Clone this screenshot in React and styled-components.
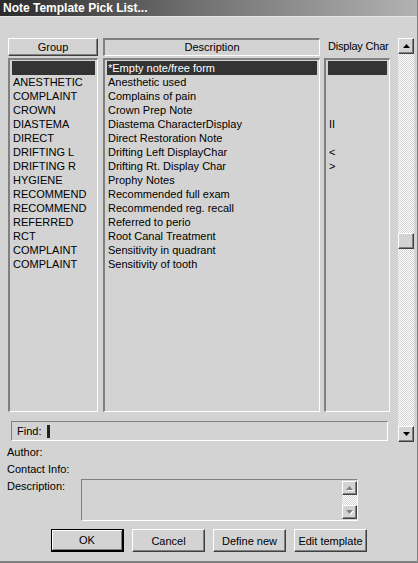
import React from 'react';
import styled, { createGlobalStyle, css } from 'styled-components';

const GlobalStyle = createGlobalStyle`
  html, body { margin: 0; padding: 0; background: #d3d3d3; }
  body {
    font-family: "Liberation Sans", Arial, sans-serif;
    font-size: 11px;
    color: #000;
  }
  * { box-sizing: border-box; }
`;

const raised = css`
  border-top: 1px solid #fff;
  border-left: 1px solid #fff;
  border-right: 1px solid #404040;
  border-bottom: 1px solid #404040;
  box-shadow: inset -1px -1px 0 #808080;
`;

const sunken = css`
  border-top: 1px solid #808080;
  border-left: 1px solid #808080;
  border-right: 1px solid #fff;
  border-bottom: 1px solid #fff;
`;

const checker = css`
  background: repeating-conic-gradient(#fff 0 25%, #d3d3d3 0 50%) 0 0 / 2px 2px;
`;

const Window = styled.div`
  width: 418px;
  height: 563px;
  display: flex;
  flex-direction: column;
  background: #d3d3d3;
  border-right: 1px solid #808080;
  border-bottom: 2px solid #808080;
  overflow: hidden;
`;

const TitleBar = styled.div`
  height: 17px;
  line-height: 17px;
  padding-left: 3px;
  color: #fff;
  font-weight: bold;
  font-size: 12px;
  background: linear-gradient(to right, #2a2a2a, #6e6e6e 45%, #b2b2b2);
  border-bottom: 1px solid #e4e4e4;
`;

const PickGrid = styled.div`
  margin-top: 21px;
  padding-left: 8px;
  display: grid;
  grid-template-columns: 95px 221px 74px 16px;
  grid-template-rows: 18px 354px 28px;
  row-gap: 2px;
`;

const ColHeader = styled.div`
  width: ${(p) => p.$w}px;
  height: 18px;
  line-height: 16px;
  text-align: center;
  ${(p) =>
    p.$pressed
      ? css`
          border-top: 2px solid #808080;
          border-left: 2px solid #808080;
          border-right: 1px solid #fff;
          border-bottom: 1px solid #fff;
          line-height: 15px;
        `
      : raised}
`;

const PlainHeader = styled.div`
  padding-left: 4px;
  line-height: 16px;
  white-space: nowrap;
  letter-spacing: -0.2px;
`;

const ListBox = styled.div`
  width: ${(p) => p.$w}px;
  height: 354px;
  border-top: 2px solid #808080;
  border-left: 2px solid #808080;
  border-right: 1px solid #fff;
  border-bottom: 1px solid #fff;
  padding: 1px 2px 0 2px;
  overflow: hidden;
`;

const Row = styled.div`
  height: 14px;
  line-height: 14px;
  padding-left: 1px;
  white-space: nowrap;
  overflow: hidden;
  background: ${(p) => (p.$sel ? '#333' : 'transparent')};
  color: ${(p) => (p.$sel ? '#fff' : '#000')};
`;

const ScrollBar = styled.div`
  grid-column: 4;
  grid-row: 1 / 4;
  width: 16px;
  display: flex;
  flex-direction: column;
  ${checker}
`;

const ScrollBtn = styled.div`
  width: 16px;
  height: 16px;
  flex: none;
  display: flex;
  align-items: center;
  justify-content: center;
  background: #d3d3d3;
  ${raised}
`;

const Track = styled.div`
  flex: 1;
  display: flex;
  flex-direction: column;
`;

const Thumb = styled.div`
  width: 16px;
  height: 16px;
  background: #d3d3d3;
  ${raised}
`;

const FindBox = styled.div`
  grid-column: 1 / 4;
  margin-left: 3px;
  margin-top: 7px;
  width: 377px;
  height: 20px;
  display: flex;
  align-items: center;
  padding-left: 5px;
  ${sunken}
`;

const Caret = styled.span`
  display: inline-block;
  width: 3px;
  height: 13px;
  margin-left: 6px;
  background: #222;
`;

const Info = styled.div`
  padding-left: 7px;
  margin-top: 2px;
  display: flex;
  flex-direction: column;
`;

const InfoLine = styled.div`
  height: 17px;
  line-height: 17px;
`;

const DescRow = styled.div`
  display: flex;
`;

const DescLabel = styled.div`
  width: 74px;
  line-height: 17px;
`;

const DescBox = styled.div`
  width: 277px;
  height: 42px;
  margin-top: 1px;
  display: flex;
  justify-content: flex-end;
  padding: 1px 0 1px 0;
  ${sunken}
`;

const MiniScroll = styled.div`
  width: 15px;
  display: flex;
  flex-direction: column;
  justify-content: space-between;
  ${checker}
`;

const MiniBtn = styled.div`
  width: 15px;
  height: 14px;
  display: flex;
  align-items: center;
  justify-content: center;
  background: #d3d3d3;
  ${raised}
`;

const ButtonRow = styled.div`
  display: flex;
  gap: 8px;
  padding-left: 51px;
  margin-top: 8px;
`;

const Button = styled.div`
  width: 73px;
  height: 23px;
  display: flex;
  align-items: center;
  justify-content: center;
  background: #d3d3d3;
  white-space: nowrap;
  ${(p) =>
    p.$default
      ? css`
          border: 1px solid #000;
          border-right-width: 2px;
          border-bottom-width: 2px;
          box-shadow: inset 1px 1px 0 #fff, inset -1px -1px 0 #808080;
        `
      : raised}
`;

const Arrow = ({ down, color = '#000', shadow }) => (
  <svg width="7" height="4" viewBox="0 0 7 4" style={{ overflow: 'visible' }}>
    {shadow && (
      <polygon
        points={down ? '1,1 8,1 4.5,5' : '1,5 8,5 4.5,1'}
        fill="#fff"
      />
    )}
    <polygon points={down ? '0,0 7,0 3.5,4' : '0,4 7,4 3.5,0'} fill={color} />
  </svg>
);

const entries = [
  ['', '*Empty note/free form', ''],
  ['ANESTHETIC', 'Anesthetic used', ''],
  ['COMPLAINT', 'Complains of pain', ''],
  ['CROWN', 'Crown Prep Note', ''],
  ['DIASTEMA', 'Diastema CharacterDisplay', 'II'],
  ['DIRECT', 'Direct Restoration Note', ''],
  ['DRIFTING L', 'Drifting Left DisplayChar', '<'],
  ['DRIFTING R', 'Drifting Rt. Display Char', '>'],
  ['HYGIENE', 'Prophy Notes', ''],
  ['RECOMMEND', 'Recommended full exam', ''],
  ['RECOMMEND', 'Recommended reg. recall', ''],
  ['REFERRED', 'Referred to perio', ''],
  ['RCT', 'Root Canal Treatment', ''],
  ['COMPLAINT', 'Sensitivity in quadrant', ''],
  ['COMPLAINT', 'Sensitivity of tooth', ''],
];

const selected = 0;

export default function App() {
  return (
    <Window>
      <GlobalStyle />
      <TitleBar>Note Template Pick List...</TitleBar>

      <PickGrid>
        <ColHeader $w={90}>Group</ColHeader>
        <ColHeader $w={217} $pressed>Description</ColHeader>
        <PlainHeader>Display Char</PlainHeader>

        <ListBox $w={90}>
          {entries.map((e, i) => (
            <Row key={i} $sel={i === selected}>{e[0]}</Row>
          ))}
        </ListBox>
        <ListBox $w={217}>
          {entries.map((e, i) => (
            <Row key={i} $sel={i === selected}>{e[1]}</Row>
          ))}
        </ListBox>
        <ListBox $w={66}>
          {entries.map((e, i) => (
            <Row key={i} $sel={i === selected}>{e[2]}</Row>
          ))}
        </ListBox>

        <ScrollBar>
          <ScrollBtn><Arrow /></ScrollBtn>
          <Track>
            <Thumb style={{ marginTop: 179 }} />
          </Track>
          <ScrollBtn><Arrow down /></ScrollBtn>
        </ScrollBar>

        <FindBox>
          Find:<Caret />
        </FindBox>
      </PickGrid>

      <Info>
        <InfoLine>Author:</InfoLine>
        <InfoLine>Contact Info:</InfoLine>
        <DescRow>
          <DescLabel>Description:</DescLabel>
          <DescBox>
            <MiniScroll>
              <MiniBtn><Arrow color="#808080" shadow /></MiniBtn>
              <MiniBtn><Arrow down color="#808080" shadow /></MiniBtn>
            </MiniScroll>
          </DescBox>
        </DescRow>
      </Info>

      <ButtonRow>
        <Button $default>OK</Button>
        <Button>Cancel</Button>
        <Button>Define new</Button>
        <Button>Edit template</Button>
      </ButtonRow>
    </Window>
  );
}
